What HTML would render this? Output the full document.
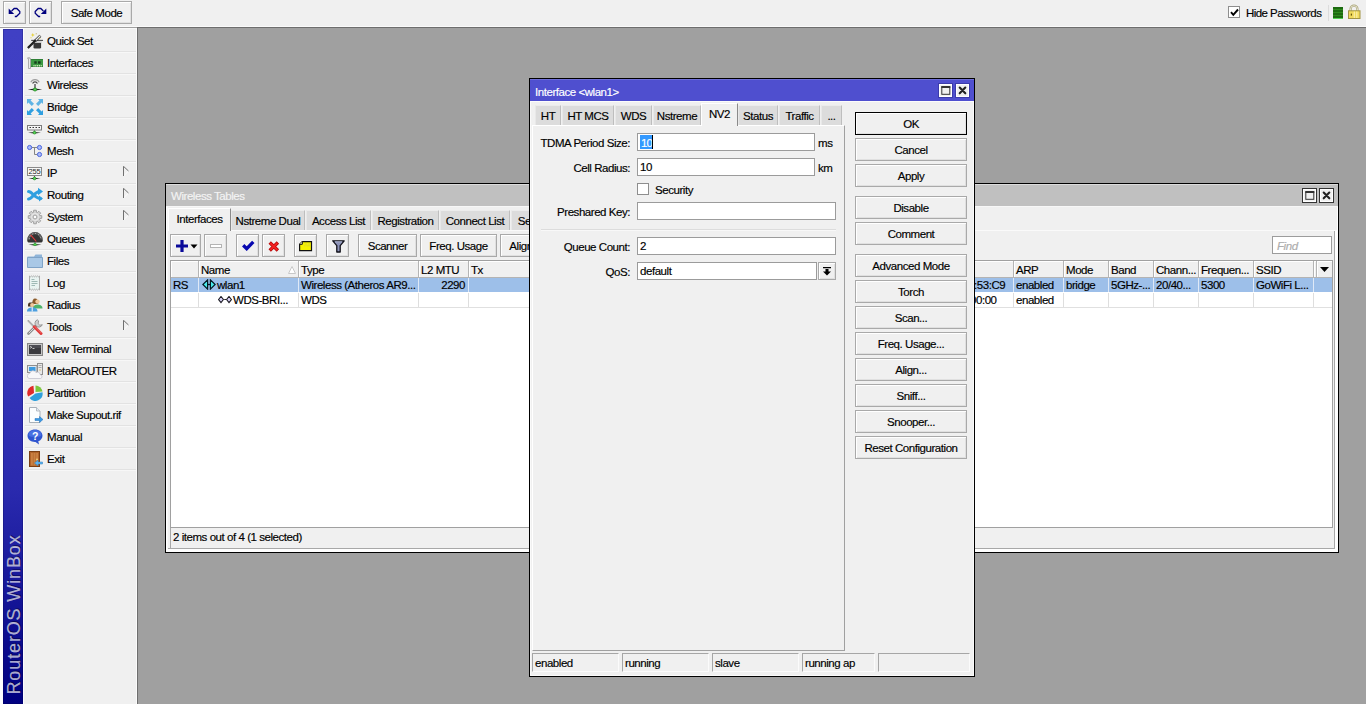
<!DOCTYPE html>
<html><head><meta charset="utf-8"><title>WinBox</title>
<style>
*{box-sizing:border-box;margin:0;padding:0}
html,body{width:1366px;height:728px;overflow:hidden;background:#fff}
body{font-family:"Liberation Sans",sans-serif;font-size:11.5px;letter-spacing:-0.45px;color:#000;position:relative;-webkit-text-stroke-width:.16px}
.abs,.abs>*{position:absolute}
#app{position:absolute;left:0;top:0;width:1366px;height:704px;background:#a0a0a0;overflow:hidden}
#topbar{position:absolute;left:0;top:0;width:1366px;height:27px;background:#f0f0f0}
#topline{position:absolute;left:0;top:26px;width:1366px;height:2px;background:linear-gradient(#fafafa 0,#fafafa 1px,#a0a0a0 1px,#a0a0a0 2px)}
#topline3{position:absolute;left:137px;top:27px;width:1229px;height:1px;background:#6e6e6e}
#topline2{position:absolute;left:0;top:28px;width:138px;height:1px;background:#f8f8f8}
.btn{position:absolute;background:#f0f0f0;border:1px solid #a9a9a9;box-shadow:inset 1px 1px 0 #fff, inset -1px -1px 0 #e0e0e0;text-align:center;white-space:nowrap}
.btn span{position:absolute;left:0;right:0;text-align:center}
#side{position:absolute;left:0;top:28px;width:137px;height:676px;background:#f0f0f0}
#sideline{position:absolute;left:136px;top:28px;width:2px;height:676px;background:linear-gradient(90deg,#fbfbfb 0,#fbfbfb 1px,#6e6e6e 1px,#6e6e6e 2px)}
#strip{position:absolute;left:3px;top:29px;width:20px;height:675px;background:linear-gradient(#4040c4 0%,#3d3dc1 35%,#2a2aae 68%,#000080 100%);box-shadow:0 0 0 1px #fbfbff, inset 0 0 0 1px rgba(0,0,60,.22)}
#strip div{position:absolute;left:0;top:0;transform-origin:0 0;transform:translate(1px,665.500px) rotate(-90deg);font-size:18px;letter-spacing:.87px;color:rgba(255,255,255,.66);white-space:nowrap;text-shadow:1px 1px 0 rgba(0,0,40,.5);line-height:20px}
.mi{position:absolute;left:23px;width:114px;height:22px}
.mi svg{position:absolute;left:4px;top:4px}
.mi .t{position:absolute;left:24px;top:5px;line-height:14px;white-space:nowrap}
.mi .sep{position:absolute;left:2px;top:22px;width:111px;height:1px;background:#e2e2e2}
.mi .sep2{position:absolute;left:2px;top:23px;width:111px;height:1px;background:#f7f7f7}
.mi .arr{position:absolute;left:100px;top:5px}
.win{position:absolute;background:#f0f0f0;border:1px solid #000;box-shadow:0 0 0 1px rgba(0,0,0,.0)}
.tb{position:absolute;left:0;top:0;right:0;height:22px}
.tb .ttl{position:absolute;left:4px;top:4px;line-height:14px;color:#f4f4f4;white-space:nowrap}
.wb{position:absolute;top:3px;width:15px;height:15px;background:#f0f0f0;border:1px solid #333;box-shadow:inset 0 0 0 1px #fff}
.tab{position:absolute;background:#dcdcdc;border:1px solid;border-color:#ececec #bebebe #dcdcdc #e8e8e8;border-bottom:none;white-space:nowrap;text-align:center;line-height:14px}
.tab.act{background:#f0f0f0;border-color:#c8c8c8;z-index:2}
.inp{position:absolute;background:#fff;border:1px solid #9b9b9b;white-space:nowrap;line-height:13px}
.lbl{position:absolute;white-space:nowrap;line-height:14px;text-align:right}
.txt{position:absolute;white-space:nowrap;line-height:14px}
.sc{position:absolute;top:653px;height:19px;border-top:1px solid #a6a6a6;border-left:1px solid #a6a6a6;border-right:1px solid #fbfbfb;border-bottom:1px solid #fbfbfb;line-height:14px;padding:2px 0 0 2px;white-space:nowrap}
.th{position:absolute;top:0;height:17px;background:#f0f0f0;border-right:1px solid #b4b4b4;border-bottom:1px solid #b4b4b4;box-shadow:inset 1px 1px 0 #fff;line-height:14px;padding:2px 0 0 2px;white-space:nowrap;overflow:hidden}
.td{position:absolute;height:15px;line-height:14px;padding:0 0 0 2px;white-space:nowrap;overflow:hidden;border-right:1px solid #dedede}
</style></head><body>
<div id="app">
<div id="topbar"></div><div id="topline"></div><div id="topline3"></div>

<div class="btn" style="left:3px;top:1px;width:23px;height:23px"><svg style="position:absolute;left:-1px;top:-1px" width="23" height="23" viewBox="0 0 23 23"><path d="M5.700 7.600v5.500h5.500z" fill="#00007e"/><path d="M8.600 10l2.600-2.500h2.600l3 3v1.700l-3.400 3.300h-1.600" fill="none" stroke="#00007e" stroke-width="1.300"/></svg></div>
<div class="btn" style="left:29px;top:1px;width:23px;height:23px"><svg style="position:absolute;left:-1px;top:-1px" width="23" height="23" viewBox="0 0 23 23" transform="scale(-1,1)"><path d="M5.700 7.600v5.500h5.500z" fill="#00007e"/><path d="M8.600 10l2.600-2.500h2.600l3 3v1.700l-3.400 3.300h-1.600" fill="none" stroke="#00007e" stroke-width="1.300"/></svg></div>
<div class="btn" style="left:61px;top:1px;width:71px;height:23px"><span style="top:4px;line-height:14px">Safe Mode</span></div>
<div style="position:absolute;left:1228px;top:6px;width:12px;height:12px;background:#fff;border:1px solid #8e8e8e"></div>
<svg style="position:absolute;left:1230px;top:8px" width="9" height="9" viewBox="0 0 9 9"><path d="M1 4.200l2.300 2.600L8 1.500" fill="none" stroke="#000" stroke-width="1.900"/></svg>
<div class="txt" style="left:1246px;top:6px;letter-spacing:-.55px">Hide Passwords</div>
<div style="position:absolute;left:1328px;top:5px;width:1px;height:16px;background:#dcdcdc"></div>
<div style="position:absolute;left:1333px;top:7px;width:10px;height:12px;background:repeating-linear-gradient(#1c6a10 0,#1c6a10 2px,#2d8a1c 2px,#2d8a1c 3px);border-bottom:1px solid #52d252"></div>
<svg style="position:absolute;left:1347px;top:4px" width="14" height="16" viewBox="0 0 14 16"><path d="M3.600 7.500V4.800a3.400 3.100 0 0 1 6.800 0V7.500" fill="none" stroke="#a8a274" stroke-width="2.200"/><path d="M3.600 7.500V4.800a3.400 3.100 0 0 1 6.800 0V7.500" fill="none" stroke="#f6f6ea" stroke-width=".8"/><rect x="1.500" y="6.800" width="11.500" height="7.700" fill="#f1da5c" stroke="#a29444" stroke-width="1"/><path d="M7.300 7.500v6.500M9.800 7.500v6.500" stroke="#f9efac" stroke-width="1.100"/><rect x="3.800" y="9.600" width="1.100" height="2" fill="#5a4a08"/></svg>
<div id="side"></div><div style="position:absolute;left:0;top:28px;width:3px;height:676px;background:#fdfdff"></div><div id="topline2"></div><div id="sideline"></div><div id="strip"><div>RouterOS WinBox</div></div>
<div class="mi" style="top:29px"><svg width="16" height="16" viewBox="0 0 16 16"><path d="M4.200 7.400h11.800" stroke="#4a4a4a" stroke-width="1.100"/><path d="M6.500 8h7.600v6.200q0 1.300-1.300 1.300h-5q-1.300 0-1.300-1.300z" fill="#383838"/><path d="M6.500 8h7.600v1.900h-7.600z" fill="#d6d6d6"/><path d="M8.300 7.700L13.400 2.700" stroke="#2a2a2a" stroke-width="2.600"/><path d="M8.800 7.200L13.300 2.800" stroke="#ececec" stroke-width="1.300"/><path d="M.900 15L8.700 7.300" stroke="#1a1a1a" stroke-width="2.300"/><path d="M1.200 15.300l7.800-7.700" stroke="#555" stroke-width=".6" stroke-dasharray="1 1"/><path d="M5.800 0l.6 1.500 1.500.5-1.500.6-.6 1.500-.6-1.500-1.500-.6 1.500-.5z" fill="#e6cf2e"/><path d="M4 3.500l.3.900.9.300-.9.300-.3.900-.3-.9-.9-.3.900-.3z" fill="#eadb6a"/><circle cx="9.200" cy=".700" r=".500" fill="#a89a30"/><circle cx="12.800" cy="5.300" r=".500" fill="#e6cf2e"/></svg><div class="t">Quick Set</div><div class="sep"></div><div class="sep2"></div></div>
<div class="mi" style="top:51px"><svg width="16" height="16" viewBox="0 0 16 16"><rect x="3.500" y="4" width="12.500" height="8" fill="#3c9a42"/><rect x="3.500" y="4" width="12.500" height="1" fill="#2e7f35"/><rect x="3.500" y="11" width="12.500" height="1" fill="#2e7f35"/><rect x="7.300" y="6.300" width="2.400" height="2.400" fill="#163d1c"/><rect x="11" y="6.300" width="2.600" height="2.400" fill="#163d1c"/><path d="M6.500 10.800h1M8.300 10.800h1M10.100 10.800h1M11.900 10.800h1M13.700 10.800h1" stroke="#d9efc2" stroke-width="1.400"/><path d="M.700 2.800h2.200v.9h.6v9.800h-2v-9.800h-.8z" fill="#ececec" stroke="#9c9c9c" stroke-width=".8"/></svg><div class="t">Interfaces</div><div class="sep"></div><div class="sep2"></div></div>
<div class="mi" style="top:73px"><svg width="16" height="16" viewBox="0 0 16 16"><path d="M3.800 5.300a4.600 4.600 0 0 1 8.400 0" fill="none" stroke="#9c9c9c" stroke-width="1.100"/><path d="M5.600 6.400a2.700 2.700 0 0 1 4.800 0" fill="none" stroke="#484848" stroke-width="1.200"/><path d="M8 7v5" stroke="#5c5c5c" stroke-width="1.500"/><path d="M.800 12.500L8 11.600l7.200.900L8 13.400z" fill="#1e1e1e"/><circle cx="8" cy="12.500" r="1.600" fill="#58d858" stroke="#1e8a1e" stroke-width=".700"/></svg><div class="t">Wireless</div><div class="sep"></div><div class="sep2"></div></div>
<div class="mi" style="top:95px"><svg width="16" height="16" viewBox="0 0 16 16"><g fill="#2f9fe0"><path d="M0 0h5L3.6 1.4 7 4.8 4.8 7 1.4 3.6 0 5z" opacity=".75"/><path d="M16 0v5l-1.400-1.400L11.200 7 9 4.800 12.400 1.400 11 0z" opacity=".75"/><path d="M0 16v-5l1.400 1.400L4.800 9 7 11.200 3.600 14.600 5 16z"/><path d="M16 16h-5l1.400-1.400L9 11.200 11.200 9l3.400 3.400L16 11z"/></g></svg><div class="t">Bridge</div><div class="sep"></div><div class="sep2"></div></div>
<div class="mi" style="top:117px"><svg width="16" height="16" viewBox="0 0 16 16"><rect x=".500" y="4.500" width="14" height="4.500" fill="#f6f6f6" stroke="#7c7c7c" stroke-width="1"/><path d="M2.500 6.500h1.500M5.500 6.500h1.500M8.500 6.500h1.500M11.500 6.500h1.500" stroke="#333" stroke-width="1.200"/><path d="M7.500 9.500v2" stroke="#555" stroke-width="1.200"/><path d="M1 11.700L7.500 11l6.500.700L7.500 12.400z" fill="#1e1e1e"/><circle cx="7.500" cy="11.700" r="1.400" fill="#58d858" stroke="#1e8a1e" stroke-width=".600"/></svg><div class="t">Switch</div><div class="sep"></div><div class="sep2"></div></div>
<div class="mi" style="top:139px"><svg width="16" height="16" viewBox="0 0 16 16"><path d="M4.500 4.500H10.500M7.500 4.500V11.500H10.500" fill="none" stroke="#858585" stroke-width="1"/><g fill="#a9baf8" stroke="#4c66de" stroke-width="1"><circle cx="2.600" cy="4.500" r="2.100"/><circle cx="12.500" cy="4.500" r="2.100"/><circle cx="12.500" cy="11.500" r="2.100"/></g></svg><div class="t">Mesh</div><div class="sep"></div><div class="sep2"></div></div>
<div class="mi" style="top:161px"><svg width="16" height="16" viewBox="0 0 16 16"><rect x=".500" y="2.500" width="14" height="8" fill="#f8f8f8" stroke="#8a8a8a" stroke-width="1"/><text x="7.500" y="9.300" font-family="Liberation Sans" font-size="7.500" text-anchor="middle" fill="#2a2a2a" letter-spacing="-.2" stroke="none">255</text><path d="M7.500 11v2" stroke="#555" stroke-width="1.200"/><path d="M1.500 13.500L7.500 12.800l6 .700L7.500 14.200z" fill="#1e1e1e"/><circle cx="7.500" cy="13.500" r="1.400" fill="#58d858" stroke="#1e8a1e" stroke-width=".600"/></svg><div class="t">IP</div><svg class="arr" width="7" height="11" viewBox="0 0 7 11"><path d="M5.500 5L.500 10" fill="none" stroke="#fdfdfd" stroke-width="1"/><path d="M.500 10V.300L5.500 5" fill="none" stroke="#707070" stroke-width="1"/></svg><div class="sep"></div><div class="sep2"></div></div>
<div class="mi" style="top:183px"><svg width="16" height="16" viewBox="0 0 16 16"><g fill="none" stroke="#2f9fe0" stroke-width="3" stroke-linecap="round"><path d="M1.500 4.500c4 0 6 7 12 7"/><path d="M1.500 12c4 0 6-7.500 11-7.500"/></g><path d="M11 .8l5 3.700-5 3.700z" fill="#2f9fe0"/><path d="M12 8.500l4 3-4 3z" fill="#2f9fe0"/></svg><div class="t">Routing</div><svg class="arr" width="7" height="11" viewBox="0 0 7 11"><path d="M5.500 5L.500 10" fill="none" stroke="#fdfdfd" stroke-width="1"/><path d="M.500 10V.300L5.500 5" fill="none" stroke="#707070" stroke-width="1"/></svg><div class="sep"></div><div class="sep2"></div></div>
<div class="mi" style="top:205px"><svg width="16" height="16" viewBox="0 0 16 16"><path d="M6.52 3.22L6.70 1.22L9.30 1.22L9.48 3.22L10.33 3.58L11.87 2.29L13.71 4.13L12.42 5.67L12.78 6.52L14.78 6.70L14.78 9.30L12.78 9.48L12.42 10.33L13.71 11.87L11.87 13.71L10.33 12.42L9.48 12.78L9.30 14.78L6.70 14.78L6.52 12.78L5.67 12.42L4.13 13.71L2.29 11.87L3.58 10.33L3.22 9.48L1.22 9.30L1.22 6.70L3.22 6.52L3.58 5.67L2.29 4.13L4.13 2.29L5.67 3.58z" fill="#d2d2d2" stroke="#9b9b9b" stroke-width=".9" stroke-linejoin="round"/><circle cx="8" cy="8" r="3.300" fill="none" stroke="#e6e6e6" stroke-width="1.200"/><circle cx="8" cy="8" r="1.900" fill="#fdfdfd" stroke="#9b9b9b" stroke-width=".9"/></svg><div class="t">System</div><svg class="arr" width="7" height="11" viewBox="0 0 7 11"><path d="M5.500 5L.500 10" fill="none" stroke="#fdfdfd" stroke-width="1"/><path d="M.500 10V.300L5.500 5" fill="none" stroke="#707070" stroke-width="1"/></svg><div class="sep"></div><div class="sep2"></div></div>
<div class="mi" style="top:227px"><svg width="16" height="16" viewBox="0 0 16 16"><path d="M.200 9.200a7.800 8 0 0 1 15.600 0c0 1.600-.900 2.300-2.200 2.300h-11.200C1.100 11.500.200 10.800.200 9.200z" fill="#343434"/><path d="M1.600 8.500a6.400 6.400 0 0 1 12.800 0" fill="none" stroke="#5c5c5c" stroke-width="2.200"/><path d="M2.300 8.200a5.700 5.700 0 0 1 11.400 0" fill="none" stroke="#e8e8e8" stroke-width=".9" stroke-dasharray=".8 2.180"/><path d="M9.300 10.500L3.600 3.800" stroke="#e23a3a" stroke-width="1.100"/><path d="M8 11.500v1.500" stroke="#444" stroke-width="1.200"/><path d="M1.500 13.700L8 13l6.500.700L8 14.400z" fill="#1e1e1e"/><path d="M8 11.900l2.200 1.800-2.200 1.100-2.200-1.100z" fill="#4fd04f" stroke="#1e8a1e" stroke-width=".5"/></svg><div class="t">Queues</div><div class="sep"></div><div class="sep2"></div></div>
<div class="mi" style="top:249px"><svg width="16" height="16" viewBox="0 0 16 16"><path d="M.500 3.500h6.500l1.500-2h6.500v12.500h-14.500z" fill="#8fb4d8"/><path d="M.500 4.500h15v10h-15z" fill="#a9c8e6" stroke="#7fa3c7" stroke-width="1"/></svg><div class="t">Files</div><div class="sep"></div><div class="sep2"></div></div>
<div class="mi" style="top:271px"><svg width="16" height="16" viewBox="0 0 16 16"><path d="M2.500 1l1 .800 1-.800 1 .800 1-.800 1 .800 1-.800 1 .800 1-.800 1 .800 1-.800v14l-1-.800-1 .800-1-.800-1 .800-1-.800-1 .800-1-.800-1 .800-1-.800-1 .800z" fill="#e9f3f1" stroke="#9a9a9a" stroke-width=".8"/><path d="M4.500 4.500h3M4.500 6.500h6M4.500 8.500h6M4.500 10.500h3.500" stroke="#9fb9b5" stroke-width="1"/></svg><div class="t">Log</div><div class="sep"></div><div class="sep2"></div></div>
<div class="mi" style="top:293px"><svg width="16" height="16" viewBox="0 0 16 16"><path d="M8 1.500c-1.800 0-3 2-2.600 5.500h5.800c.3-3.500-1-5.500-3.200-5.500z" fill="#8a5a2a"/><circle cx="10.500" cy="4.600" r="2.200" fill="#f1c79a"/><path d="M6 11.500c0-3 2-4 4.500-4s5 1 5 4z" fill="#4fb36a"/><path d="M3 5.500c-1.500 0-2.300 1.500-2 4h6c.3-2.500-.5-4-2-4z" fill="#4a3624"/><circle cx="5.200" cy="8" r="2.100" fill="#f1c79a"/><path d="M0 14.500c0-3 2-4 5.200-4s5.300 1 5.300 4z" fill="#4d9fe0"/><path d="M5.200 10.500v4" stroke="#fff" stroke-width="1"/></svg><div class="t">Radius</div><div class="sep"></div><div class="sep2"></div></div>
<div class="mi" style="top:315px"><svg width="16" height="16" viewBox="0 0 16 16"><path d="M1.500 14.500L10 6" stroke="#8a8a8a" stroke-width="2.600" stroke-linecap="round"/><path d="M1.800 14.200L10 6" stroke="#dcdcdc" stroke-width="1"/><path d="M10.300.800a3.800 3.800 0 1 0 5 4.900l-2.500.500-1.700-1.700.5-2.600z" fill="#cfcfcf" stroke="#858585" stroke-width=".8"/><path d="M1.300 1.800L6.800 7.300" stroke="#9c9c9c" stroke-width="1.700" stroke-linecap="round"/><path d="M1.300 1.800L6.800 7.300" stroke="#e0e0e0" stroke-width=".5"/><path d="M7.300 7.800l6.700 6.700" stroke="#e03a3a" stroke-width="3" stroke-linecap="round"/><path d="M7.800 7.400l6.600 6.600" stroke="#f08a8a" stroke-width=".7"/></svg><div class="t">Tools</div><svg class="arr" width="7" height="11" viewBox="0 0 7 11"><path d="M5.500 5L.500 10" fill="none" stroke="#fdfdfd" stroke-width="1"/><path d="M.500 10V.300L5.500 5" fill="none" stroke="#707070" stroke-width="1"/></svg><div class="sep"></div><div class="sep2"></div></div>
<div class="mi" style="top:337px"><svg width="16" height="16" viewBox="0 0 16 16"><rect x=".500" y="2.500" width="15" height="12" fill="#c6c6c6" stroke="#858585" stroke-width="1"/><rect x="2" y="4" width="12" height="9" fill="#3a3a3e"/><rect x="2" y="4" width="12" height="3" fill="#4c4c52"/><path d="M3.200 5.300l1.600 1-1.600 1M5.500 7.500h2" fill="none" stroke="#e6e6e6" stroke-width=".8"/></svg><div class="t">New Terminal</div><div class="sep"></div><div class="sep2"></div></div>
<div class="mi" style="top:359px"><svg width="16" height="16" viewBox="0 0 16 16"><rect x="10.500" y=".500" width="5" height="11" fill="#e8e8e8" stroke="#8f8f8f" stroke-width="1"/><path d="M11.500 2.500h3M11.500 4.500h3" stroke="#9a9a9a" stroke-width=".8"/><rect x="12.300" y="6.500" width="1.400" height="1" fill="#d2b04a"/><rect x=".500" y="2.500" width="9.500" height="7" fill="#dfe7ef" stroke="#8f8f8f" stroke-width="1"/><rect x="2" y="4" width="6.500" height="4" fill="#3e9be0"/><path d="M2.200 15.500a2.600 2.600 0 0 1 .600-5.100 3.300 3.300 0 0 1 6.200-.900 2.800 2.800 0 0 1 4.200 2.200 2 2 0 0 1 .6 3.800z" fill="#f7f7f9" stroke="#bcbcc8" stroke-width=".7"/></svg><div class="t">MetaROUTER</div><div class="sep"></div><div class="sep2"></div></div>
<div class="mi" style="top:381px"><svg width="16" height="16" viewBox="0 0 16 16"><path d="M7 8L6.500 .700A7.300 7.300 0 0 0 1.200 11.500z" fill="#e02a2a"/><path d="M8.500 7V.5A7 7 0 0 1 15.500 6.500z" fill="#7cc63c"/><path d="M8.500 8.500l7-1.200A7.300 7.300 0 0 1 2.500 13z" fill="#2fa0dc"/></svg><div class="t">Partition</div><div class="sep"></div><div class="sep2"></div></div>
<div class="mi" style="top:403px"><svg width="16" height="16" viewBox="0 0 16 16"><path d="M2.500.500h7l3.500 3.500v11.500h-10.500z" fill="#fbfdfe" stroke="#a8b0b8" stroke-width="1"/><path d="M9.500.500v3.500h3.500" fill="#e4eaf0" stroke="#a8b0b8" stroke-width=".8"/><path d="M8 11.500h4.500v-2l3.500 3-3.500 3v-2H8z" fill="#3a9ae6" stroke="#1f6fb8" stroke-width=".5"/></svg><div class="t">Make Supout.rif</div><div class="sep"></div><div class="sep2"></div></div>
<div class="mi" style="top:425px"><svg width="16" height="16" viewBox="0 0 16 16"><path d="M8 .500c4.200 0 7.500 2.700 7.500 6.200 0 2.500-1.700 4.600-4.200 5.600l.7 3.200-3.500-2.600H8c-4.200 0-7.500-2.700-7.500-6.200S3.800.500 8 .500z" fill="#2f55cf"/><path d="M8 1.200c3.600 0 6.400 1.800 6.400 4.200S11.600 7.800 8 7.800 1.600 7.800 1.600 5.400 4.400 1.200 8 1.200z" fill="#5a82ee" opacity=".6"/><text x="8" y="10.800" font-family="Liberation Sans" font-weight="bold" font-size="10.500" text-anchor="middle" fill="#fff">?</text></svg><div class="t">Manual</div><div class="sep"></div><div class="sep2"></div></div>
<div class="mi" style="top:447px"><svg width="16" height="16" viewBox="0 0 16 16"><rect x="2.500" y=".500" width="10" height="15" fill="#b0642a" stroke="#7a3f14" stroke-width="1"/><rect x="4" y="2" width="7" height="12.500" fill="#c98042"/><path d="M6.300 2v12.500M8.700 2v12.500" stroke="#b56c30" stroke-width=".8"/><circle cx="10" cy="8.500" r=".9" fill="#f2d27a"/><path d="M15.500 11h-4.500V9.200L7.500 12l3.500 2.800V13h4.500z" fill="#5fb4ee" stroke="#2a7fc0" stroke-width=".5"/></svg><div class="t">Exit</div><div class="sep"></div><div class="sep2"></div></div><div class="win" style="left:165px;top:183px;width:1174px;height:370px">
<div style="position:absolute;left:0;top:22px;width:1px;bottom:0;background:#fff"></div><div style="position:absolute;left:1px;top:22px;width:1px;bottom:0;background:#f8f8f8"></div>
<div style="position:absolute;right:0;top:22px;width:1px;bottom:0;background:#fff"></div><div style="position:absolute;right:0;top:46px;width:3px;bottom:0;background:#fff"></div><div style="position:absolute;right:3px;top:46px;width:1px;bottom:3px;background:#a8a8a8"></div>
<div style="position:absolute;left:0;right:0;bottom:0;height:3px;background:#fff"></div><div style="position:absolute;left:2px;right:3px;bottom:3px;height:1px;background:#a8a8a8"></div>
<div style="position:absolute;left:0;right:0;top:22px;height:1px;background:#f7f7f7"></div>
<div class="tb" style="background:#c0c0c0;border-top:1px solid #dcdcdc"><div class="ttl" style="left:5px;top:4px">Wireless Tables</div>
<div class="wb" style="left:1136px"><svg width="13" height="13" viewBox="0 0 13 13" style="position:absolute;left:0;top:0"><rect x="2.800" y="3" width="8" height="7.300" fill="none" stroke="#333" stroke-width="1"/><path d="M2.300 3h9" stroke="#333" stroke-width="2"/></svg></div>
<div class="wb" style="left:1153px"><svg width="13" height="13" viewBox="0 0 13 13" style="position:absolute;left:0;top:0"><path d="M3.700 3.500l5.600 5.800M9.300 3.500l-5.600 5.800" stroke="#222" stroke-width="2.100" stroke-linecap="round"/></svg></div>
</div>
<div class="tab act" style="left:2px;top:24px;width:63px;height:23px;padding-top:3px;border-color:#fff #8a8a8a #f0f0f0 #fff">Interfaces</div>
<div class="tab" style="left:65px;top:26px;width:74px;height:20px;padding-top:3px">Nstreme Dual</div>
<div class="tab" style="left:140px;top:26px;width:65px;height:20px;padding-top:3px">Access List</div>
<div class="tab" style="left:206px;top:26px;width:67px;height:20px;padding-top:3px">Registration</div>
<div class="tab" style="left:274px;top:26px;width:70px;height:20px;padding-top:3px">Connect List</div>
<div class="tab" style="left:345px;top:26px;width:89px;height:20px;padding-top:3px">Security Profiles</div>
<div style="position:absolute;left:65px;top:46px;width:1106px;height:1px;background:#fafafa"></div>
<div class="btn" style="left:4px;top:50px;width:31px;height:23px"><svg style="position:absolute;left:5px;top:5px" width="22" height="12" viewBox="0 0 22 12"><path d="M6 0v12M0 6h12" stroke="#0a0a9a" stroke-width="3.200"/><path d="M14.500 4.500h7l-3.500 4z" fill="#000"/></svg></div>
<div class="btn" style="left:38px;top:50px;width:23px;height:23px"><div style="position:absolute;left:5px;top:9px;width:12px;height:4px;border:1px solid #b4b4b4;background:#fff"></div></div>
<div class="btn" style="left:70px;top:50px;width:23px;height:23px"><svg style="position:absolute;left:5px;top:4px" width="13" height="12" viewBox="0 0 13 12"><path d="M1.200 6.300l3.500 3.400L11.300 2.800" fill="none" stroke="#0808b0" stroke-width="3.300"/></svg></div>
<div class="btn" style="left:96px;top:50px;width:23px;height:23px"><svg style="position:absolute;left:5px;top:5px" width="12" height="12" viewBox="0 0 12 12"><path d="M1.700 2.500l8.200 8M9.900 2.500l-8.200 8" stroke="#b40808" stroke-width="3.400"/><path d="M2.200 3l7.200 7M9.400 3l-7.200 7" stroke="#f32222" stroke-width="1.900"/></svg></div>
<div class="btn" style="left:128px;top:50px;width:23px;height:23px"><svg style="position:absolute;left:4px;top:6px" width="14" height="11" viewBox="0 0 14 11"><path d="M3.300 .600h9.200v9h-11.900v-6.300z" fill="#f6f200" stroke="#111" stroke-width="1.200"/><path d="M3.300 .600v2.700h-2.700" fill="#fbfbd0" stroke="#111" stroke-width="1"/><path d="M6 3h2M9 3h2M5 4.800h1.500M7.500 4.800h3.500" stroke="#d6d23a" stroke-width=".8"/></svg></div>
<div class="btn" style="left:160px;top:50px;width:23px;height:23px"><svg style="position:absolute;left:5px;top:5px" width="13" height="13" viewBox="0 0 13 13"><path d="M.800 .800h11.400l-4 4.800v6.400h-3.400v-6.400z" fill="#8c92b8" stroke="#101018" stroke-width="1.300" stroke-linejoin="round"/><path d="M3 1.800h7" stroke="#b4b9d4" stroke-width=".9"/></svg></div>
<div class="btn" style="left:192px;top:50px;width:59px;height:23px"><span style="top:4px;line-height:14px">Scanner</span></div>
<div class="btn" style="left:254px;top:50px;width:77px;height:23px"><span style="top:4px;line-height:14px">Freq. Usage</span></div>
<div class="btn" style="left:334px;top:50px;width:42px;height:23px"><span style="top:4px;line-height:14px">Align</span></div>
<div class="inp" style="left:1106px;top:52px;width:60px;height:18px;border-color:#9c9c9c"><span style="position:absolute;left:4px;top:2px;color:#adadad;font-style:italic;line-height:14px">Find</span></div>
<div style="position:absolute;left:4px;top:76px;width:1163px;height:268px;background:#fff;border:1px solid #a0a0a0;overflow:hidden">
<div class="th" style="left:0px;width:28px"></div>
<div class="th" style="left:28px;width:100px">Name</div>
<div class="th" style="left:128px;width:120px">Type</div>
<div class="th" style="left:248px;width:50px">L2 MTU</div>
<div class="th" style="left:298px;width:91px">Tx</div>
<div class="th" style="left:389px;width:454px"></div>
<div class="th" style="left:843px;width:50px">ARP</div>
<div class="th" style="left:893px;width:45px">Mode</div>
<div class="th" style="left:938px;width:45px">Band</div>
<div class="th" style="left:983px;width:45px">Chann...</div>
<div class="th" style="left:1028px;width:55px">Frequen...</div>
<div class="th" style="left:1083px;width:60px">SSID</div>
<div class="th" style="left:1143px;width:3px;padding:0"></div>
<div class="th" style="left:1146px;width:15px;padding:0;border-right:none"><svg style="position:absolute;left:3px;top:6px" width="9" height="5" viewBox="0 0 9 5"><path d="M0 0h9L4.500 5z" fill="#000"/></svg></div>
<svg style="position:absolute;left:117px;top:5px" width="8" height="8" viewBox="0 0 8 8"><path d="M4 .500L.500 7.500h7z" fill="#fff" stroke="#c8c8c8" stroke-width="1"/></svg>
<div style="position:absolute;left:0;top:17px;width:1162px;height:14px;background:#9dbfe9"></div>
<div class="td" style="left:0px;top:17px;width:28px;height:14px;border-right-color:#dfe9f7;">RS</div>
<div class="td" style="left:28px;top:17px;width:100px;height:14px;border-right-color:#dfe9f7;"></div>
<div class="td" style="left:128px;top:17px;width:120px;height:14px;border-right-color:#dfe9f7;">Wireless (Atheros AR9...</div>
<div class="td" style="left:248px;top:17px;width:50px;height:14px;border-right-color:#dfe9f7;text-align:right;padding:0 3px 0 0;">2290</div>
<div class="td" style="left:298px;top:17px;width:91px;height:14px;border-right-color:#dfe9f7;"></div>
<div class="td" style="left:389px;top:17px;width:454px;height:14px;border-right-color:#dfe9f7;"></div>
<div class="td" style="left:843px;top:17px;width:50px;height:14px;border-right-color:#dfe9f7;">enabled</div>
<div class="td" style="left:893px;top:17px;width:45px;height:14px;border-right-color:#dfe9f7;">bridge</div>
<div class="td" style="left:938px;top:17px;width:45px;height:14px;border-right-color:#dfe9f7;">5GHz-...</div>
<div class="td" style="left:983px;top:17px;width:45px;height:14px;border-right-color:#dfe9f7;">20/40...</div>
<div class="td" style="left:1028px;top:17px;width:55px;height:14px;border-right-color:#dfe9f7;">5300</div>
<div class="td" style="left:1083px;top:17px;width:60px;height:14px;border-right-color:#dfe9f7;">GoWiFi L...</div>
<div class="td" style="left:0px;top:32px;width:28px;height:14px"></div>
<div class="td" style="left:28px;top:32px;width:100px;height:14px"></div>
<div class="td" style="left:128px;top:32px;width:120px;height:14px">WDS</div>
<div class="td" style="left:248px;top:32px;width:50px;height:14px"></div>
<div class="td" style="left:298px;top:32px;width:91px;height:14px"></div>
<div class="td" style="left:389px;top:32px;width:454px;height:14px"></div>
<div class="td" style="left:843px;top:32px;width:50px;height:14px">enabled</div>
<div class="td" style="left:893px;top:32px;width:45px;height:14px"></div>
<div class="td" style="left:938px;top:32px;width:45px;height:14px"></div>
<div class="td" style="left:983px;top:32px;width:45px;height:14px"></div>
<div class="td" style="left:1028px;top:32px;width:55px;height:14px"></div>
<div class="td" style="left:1083px;top:32px;width:60px;height:14px"></div>
<div style="position:absolute;left:0;top:46px;width:1162px;height:1px;background:#e0e0e0"></div>
<div class="txt" style="left:803px;top:17px;line-height:14px">:53:C9</div><div class="txt" style="left:799px;top:32px;line-height:14px">00:00</div>
<svg style="position:absolute;left:31px;top:18px" width="14" height="11" viewBox="0 0 14 11"><path d="M3 5.500h8" stroke="#031a22" stroke-width="1.300"/><path d="M.900 5.500L5.600 .900v9.200zM13.100 5.500L8.400 .900v9.200z" fill="#48ecec" stroke="#031a22" stroke-width="1.200" stroke-linejoin="miter"/></svg>
<div class="txt" style="left:46px;top:17px;line-height:14px">wlan1</div>
<svg style="position:absolute;left:47px;top:35px" width="14" height="8" viewBox="0 0 14 8"><path d="M.600 3.500l2.400-3 2.400 3-2.400 3zM13.400 3.500l-2.400-3-2.400 3 2.400 3z" fill="#dcd4fa" stroke="#1a1a22" stroke-width="1.100"/><path d="M6.200 3.500h1.800" stroke="#222" stroke-width="1.100"/></svg>
<div class="txt" style="left:62px;top:32px;line-height:14px">WDS-BRI...</div>
</div>
<div style="position:absolute;left:4px;top:344px;width:1px;height:20px;background:#a8a8a8"></div>
<div class="txt" style="left:7px;top:346px">2 items out of 4 (1 selected)</div>
</div>
<div class="win" style="left:529px;top:78px;width:446px;height:599px;box-shadow:inset 0 0 0 1px #fafafa">
<div style="position:absolute;left:0;right:0;top:22px;height:1px;background:#fcfcfc"></div>
<div class="tb" style="background:#4f4fcf;border-top:1px solid #6e6ed8"><div class="ttl" style="left:5px;top:5px;color:#fff">Interface &lt;wlan1&gt;</div>
<div class="wb" style="left:408px;border-color:#3b3bab"><svg width="13" height="13" viewBox="0 0 13 13" style="position:absolute;left:0;top:0"><rect x="2.800" y="3" width="8" height="7.300" fill="none" stroke="#333" stroke-width="1"/><path d="M2.300 3h9" stroke="#333" stroke-width="2"/></svg></div>
<div class="wb" style="left:425px;border-color:#3b3bab"><svg width="13" height="13" viewBox="0 0 13 13" style="position:absolute;left:0;top:0"><path d="M3.700 3.500l5.600 5.800M9.300 3.500l-5.600 5.800" stroke="#222" stroke-width="2.100" stroke-linecap="round"/></svg></div>
</div>
<div class="tab" style="left:5px;top:26px;width:26px;height:20px;padding-top:3px">HT</div>
<div class="tab" style="left:32px;top:26px;width:52px;height:20px;padding-top:3px">HT MCS</div>
<div class="tab" style="left:85px;top:26px;width:37px;height:20px;padding-top:3px">WDS</div>
<div class="tab" style="left:123px;top:26px;width:48px;height:20px;padding-top:3px">Nstreme</div>
<div class="tab" style="left:208px;top:26px;width:40px;height:20px;padding-top:3px">Status</div>
<div class="tab" style="left:249px;top:26px;width:41px;height:20px;padding-top:3px">Traffic</div>
<div class="tab" style="left:291px;top:26px;width:21px;height:20px;padding-top:3px">...</div>
<div class="tab act" style="left:171px;top:24px;width:37px;height:23px;padding-top:3px;border-color:#fff #8a8a8a #f0f0f0 #fff">NV2</div>
<div style="position:absolute;left:2px;top:46px;width:313px;height:526px;border:1px solid;border-color:#fff #a0a0a0 #a0a0a0 #fff;z-index:1"></div>
<div class="lbl" style="left:5px;width:95px;top:57px">TDMA Period Size:</div>
<div class="lbl" style="left:5px;width:95px;top:82px">Cell Radius:</div>
<div class="lbl" style="left:5px;width:95px;top:126px">Preshared Key:</div>
<div class="lbl" style="left:5px;width:95px;top:161px">Queue Count:</div>
<div class="lbl" style="left:5px;width:95px;top:186px">QoS:</div>
<div class="inp" style="left:107px;top:54px;width:178px;height:18px"><span style="position:absolute;left:2px;top:1px;background:#3399ff;color:#fff;padding:0 0 0 1px;height:14px;width:12px;line-height:16px;letter-spacing:-1px;overflow:hidden">10</span><span style="position:absolute;left:14px;top:1px;width:1px;height:14px;background:#000"></span></div>
<div class="txt" style="left:288px;top:57px">ms</div>
<div class="inp" style="left:107px;top:79px;width:178px;height:18px"><span style="position:absolute;left:2px;top:2px">10</span></div>
<div class="txt" style="left:288px;top:82px">km</div>
<div style="position:absolute;left:107px;top:104px;width:12px;height:12px;background:#fff;border:1px solid #8e8e8e"></div>
<div class="txt" style="left:125px;top:104px">Security</div>
<div class="inp" style="left:107px;top:123px;width:199px;height:18px"></div>
<div style="position:absolute;left:11px;top:150px;width:295px;height:1px;background:#dcdcdc"></div><div style="position:absolute;left:11px;top:151px;width:295px;height:1px;background:#f8f8f8"></div>
<div class="inp" style="left:107px;top:158px;width:199px;height:18px"><span style="position:absolute;left:2px;top:2px">2</span></div>
<div class="inp" style="left:107px;top:183px;width:180px;height:18px"><span style="position:absolute;left:2px;top:2px">default</span></div>
<div class="btn" style="left:288px;top:183px;width:18px;height:18px"><svg style="position:absolute;left:4px;top:4px" width="8" height="9" viewBox="0 0 8 9"><path d="M0 .600h8" stroke="#000" stroke-width="1.300"/><path d="M2.500 2h3v2.500h2.500l-4 4-4-4h2.500z" fill="#000"/></svg></div>
<div class="btn" style="left:325px;top:33px;width:112px;height:23px;border-color:#000;"><span style="top:4px;line-height:14px">OK</span></div>
<div class="btn" style="left:325px;top:59px;width:112px;height:23px;"><span style="top:4px;line-height:14px">Cancel</span></div>
<div class="btn" style="left:325px;top:85px;width:112px;height:23px;"><span style="top:4px;line-height:14px">Apply</span></div>
<div class="btn" style="left:325px;top:117px;width:112px;height:23px;"><span style="top:4px;line-height:14px">Disable</span></div>
<div class="btn" style="left:325px;top:143px;width:112px;height:23px;"><span style="top:4px;line-height:14px">Comment</span></div>
<div class="btn" style="left:325px;top:175px;width:112px;height:23px;"><span style="top:4px;line-height:14px">Advanced Mode</span></div>
<div class="btn" style="left:325px;top:201px;width:112px;height:23px;"><span style="top:4px;line-height:14px">Torch</span></div>
<div class="btn" style="left:325px;top:227px;width:112px;height:23px;"><span style="top:4px;line-height:14px">Scan...</span></div>
<div class="btn" style="left:325px;top:253px;width:112px;height:23px;"><span style="top:4px;line-height:14px">Freq. Usage...</span></div>
<div class="btn" style="left:325px;top:279px;width:112px;height:23px;"><span style="top:4px;line-height:14px">Align...</span></div>
<div class="btn" style="left:325px;top:305px;width:112px;height:23px;"><span style="top:4px;line-height:14px">Sniff...</span></div>
<div class="btn" style="left:325px;top:331px;width:112px;height:23px;"><span style="top:4px;line-height:14px">Snooper...</span></div>
<div class="btn" style="left:325px;top:357px;width:112px;height:23px;"><span style="top:4px;line-height:14px">Reset Configuration</span></div>
<div class="sc" style="left:2px;top:574px;width:87px">enabled</div>
<div class="sc" style="left:92px;top:574px;width:87px">running</div>
<div class="sc" style="left:182px;top:574px;width:87px">slave</div>
<div class="sc" style="left:272px;top:574px;width:73px">running ap</div>
<div class="sc" style="left:348px;top:574px;width:92px"></div>
</div>
</div></body></html>
